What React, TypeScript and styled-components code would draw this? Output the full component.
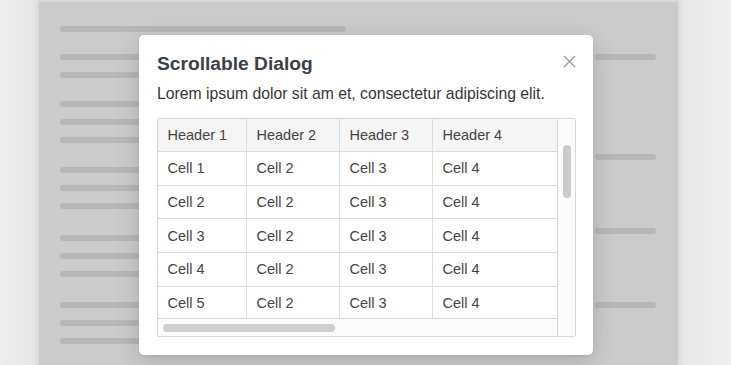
import React, { FC } from 'react';
import styled, { createGlobalStyle } from 'styled-components';

const GlobalStyle = createGlobalStyle`
  html, body {
    margin: 0;
    padding: 0;
    width: 731px;
    height: 365px;
    overflow: hidden;
    background: linear-gradient(90deg, #ededed 0%, #e4e4e4 5%, #e6e6e6 93%, #efefef 100%);
    font-family: "Liberation Sans", Arial, sans-serif;
  }
`;

const Screen = styled.div`
  position: relative;
  width: 731px;
  height: 365px;
  display: flex;
`;

const Page = styled.div`
  box-sizing: border-box;
  width: 639px;
  margin-left: 39px;
  height: 365px;
  background: #cbcbcb;
  border-top: 2px solid #d7d7d7;
  box-shadow: 0 0 6px rgba(0, 0, 0, 0.12);
  padding: 24px 22px 0 21px;
  display: flex;
  flex-direction: column;
`;

const Line = styled.div<{ $w: number }>`
  width: ${(p) => p.$w}px;
  height: 6px;
  border-radius: 3px;
  background: #b7b7b7;
`;

const Columns = styled.div`
  display: flex;
  justify-content: space-between;
  margin-top: 22px;
`;

const LeftCol = styled.div`
  display: flex;
  flex-direction: column;
  gap: 23px;
`;

const Group = styled.div<{ $push?: number }>`
  display: flex;
  flex-direction: column;
  gap: 12px;
  margin-top: ${(p) => p.$push ?? 0}px;
`;

const RightCol = styled.div`
  display: flex;
  flex-direction: column;
  gap: 94px;
`;

const RightLower = styled.div`
  display: flex;
  flex-direction: column;
  gap: 68px;
`;

const Dialog = styled.div`
  position: absolute;
  left: 139px;
  top: 35px;
  box-sizing: border-box;
  width: 454px;
  height: 320px;
  background: #fff;
  border-radius: 5px;
  box-shadow: 0 6px 24px rgba(0, 0, 0, 0.16), 0 1px 3px rgba(0, 0, 0, 0.08);
  padding: 17px 17px 0 18px;
  display: flex;
  flex-direction: column;
`;

const DialogHead = styled.div`
  display: flex;
  justify-content: space-between;
  align-items: flex-start;
`;

const Title = styled.h2`
  margin: 0;
  font-size: 19.2px;
  line-height: 24px;
  font-weight: 700;
  color: #3b4148;
`;

const CloseButton = styled.button`
  margin-top: 3px;
  width: 13px;
  height: 13px;
  padding: 0;
  border: 0;
  background: none;
  display: flex;
`;

const Lead = styled.p`
  margin: 8px 0 14px;
  font-size: 15.75px;
  line-height: 20px;
  color: #363636;
`;

const TableBox = styled.div`
  box-sizing: border-box;
  width: 419px;
  height: 219px;
  border: 1px solid #d6d6d6;
  border-radius: 2px;
  display: grid;
  grid-template-columns: 399px 18px;
  grid-template-rows: 199px 18px;
  overflow: hidden;
`;

const Viewport = styled.div`
  overflow: hidden;
`;

const Table = styled.table`
  border-collapse: separate;
  border-spacing: 0;
  table-layout: fixed;
  width: 460px;
  font-size: 14.5px;
  color: #444;
`;

const Th = styled.th<{ $w: number }>`
  box-sizing: border-box;
  width: ${(p) => p.$w}px;
  height: 33px;
  padding: 0 0 0 9.5px;
  text-align: left;
  font-weight: 400;
  background: #f5f5f5;
  border-right: 1px solid #dcdcdc;
  border-bottom: 1px solid #dcdcdc;
`;

const Td = styled.td`
  box-sizing: border-box;
  height: 33.7px;
  padding: 0 0 0 9.5px;
  border-right: 1px solid #dcdcdc;
  border-bottom: 1px solid #dcdcdc;
`;

const VTrack = styled.div`
  grid-column: 2;
  grid-row: 1 / 3;
  border-left: 1px solid #d6d6d6;
  background: #fbfbfb;
  display: flex;
  justify-content: center;
`;

const VThumb = styled.div`
  margin-top: 26px;
  width: 8px;
  height: 53px;
  border-radius: 4px;
  background: #cbcbcb;
`;

const HTrack = styled.div`
  grid-column: 1;
  grid-row: 2;
  border-top: 1px solid #d6d6d6;
  background: #fbfbfb;
  display: flex;
  align-items: center;
`;

const HThumb = styled.div`
  margin-left: 5px;
  width: 172px;
  height: 8px;
  border-radius: 4px;
  background: #cfcfcf;
`;

const headers = ['Header 1', 'Header 2', 'Header 3', 'Header 4'];
const widths = [89, 93, 93, 185];
const rows = ['Cell 1', 'Cell 2', 'Cell 3', 'Cell 4', 'Cell 5'];

const App: FC = () => {
  return (
    <>
      <GlobalStyle />
      <Screen>
        <Page>
          <Line $w={286} />
          <Columns>
            <LeftCol>
              <Group>
                <Line $w={420} />
                <Line $w={420} />
              </Group>
              <Group>
                <Line $w={420} />
                <Line $w={420} />
                <Line $w={420} />
              </Group>
              <Group $push={1}>
                <Line $w={420} />
                <Line $w={420} />
                <Line $w={420} />
              </Group>
              <Group $push={3}>
                <Line $w={420} />
                <Line $w={420} />
                <Line $w={420} />
              </Group>
              <Group $push={2}>
                <Line $w={420} />
                <Line $w={420} />
                <Line $w={420} />
              </Group>
            </LeftCol>
            <RightCol>
              <Line $w={61} />
              <RightLower>
                <Line $w={61} />
                <Line $w={61} />
                <Line $w={61} />
              </RightLower>
            </RightCol>
          </Columns>
        </Page>

        <Dialog>
          <DialogHead>
            <Title>Scrollable Dialog</Title>
            <CloseButton aria-label="Close">
              <svg width="13" height="13" viewBox="0 0 13 13">
                <path d="M1 1L12 12M12 1L1 12" stroke="#9c9c9c" strokeWidth="1.4" />
              </svg>
            </CloseButton>
          </DialogHead>
          <Lead>Lorem ipsum dolor sit am et, consectetur adipiscing elit.</Lead>
          <TableBox>
            <Viewport>
              <Table>
                <thead>
                  <tr>
                    {headers.map((h, i) => (
                      <Th key={h} $w={widths[i]}>
                        {h}
                      </Th>
                    ))}
                  </tr>
                </thead>
                <tbody>
                  {rows.map((r) => (
                    <tr key={r}>
                      <Td>{r}</Td>
                      <Td>Cell 2</Td>
                      <Td>Cell 3</Td>
                      <Td>Cell 4</Td>
                    </tr>
                  ))}
                </tbody>
              </Table>
            </Viewport>
            <VTrack>
              <VThumb />
            </VTrack>
            <HTrack>
              <HThumb />
            </HTrack>
          </TableBox>
        </Dialog>
      </Screen>
    </>
  );
};

export default App;
